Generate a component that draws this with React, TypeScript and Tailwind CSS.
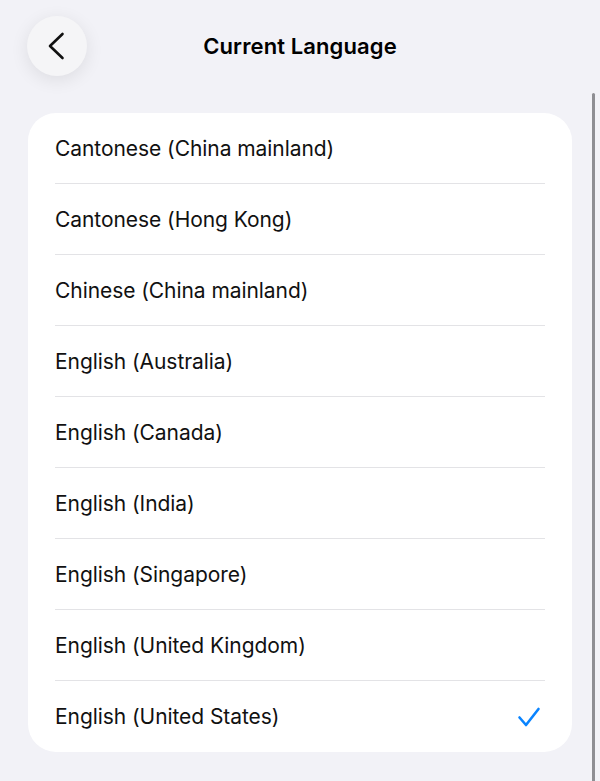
const languages = [
  "Cantonese (China mainland)",
  "Cantonese (Hong Kong)",
  "Chinese (China mainland)",
  "English (Australia)",
  "English (Canada)",
  "English (India)",
  "English (Singapore)",
  "English (United Kingdom)",
  "English (United States)",
];

const selected = "English (United States)";

export default function App() {
  return (
    <div
      className="relative h-[781px] w-[600px] overflow-hidden bg-[#f2f2f7] text-black"
      style={{ fontFamily: "Inter, 'Noto Sans', sans-serif" }}
    >
      <header className="relative flex h-[92px] items-center justify-center">
        <button
          type="button"
          aria-label="Back"
          className="absolute left-[27px] top-[16px] flex h-[60px] w-[60px] items-center justify-center rounded-full bg-[#f5f5f7] shadow-[0_4px_18px_rgba(0,0,0,0.09)]"
        >
          <svg width="60" height="60" viewBox="0 0 60 60" fill="none">
            <path
              d="M35.5 18 L23 30 L35.5 42"
              stroke="#111"
              strokeWidth="2.6"
              strokeLinecap="round"
              strokeLinejoin="round"
            />
          </svg>
        </button>
        <h1 className="text-[22px] font-semibold tracking-[0.005em]">Current Language</h1>
      </header>

      <div className="px-7 pt-[21px]">
        <ul className="rounded-[28px] bg-white px-[27px]">
          {languages.map((lang, i) => (
            <li
              key={lang}
              className={`flex h-[71px] items-center justify-between ${
                i < languages.length - 1 ? "border-b border-[#e3e3e6]" : ""
              }`}
            >
              <span className="pt-[1px] text-[21px] tracking-[-0.003em] text-[#111]">{lang}</span>
              {lang === selected && (
                <svg width="24" height="22" viewBox="0 0 24 22" fill="none" className="mr-[4px]">
                  <path
                    d="M2.5 11.5 L9 19 L21.5 3"
                    stroke="#0a84ff"
                    strokeWidth="2.6"
                    strokeLinecap="round"
                    strokeLinejoin="round"
                  />
                </svg>
              )}
            </li>
          ))}
        </ul>
      </div>

      <div className="absolute right-[5px] top-[93px] h-[700px] w-[3px] rounded-full bg-[#8e8e93]" />
    </div>
  );
}
